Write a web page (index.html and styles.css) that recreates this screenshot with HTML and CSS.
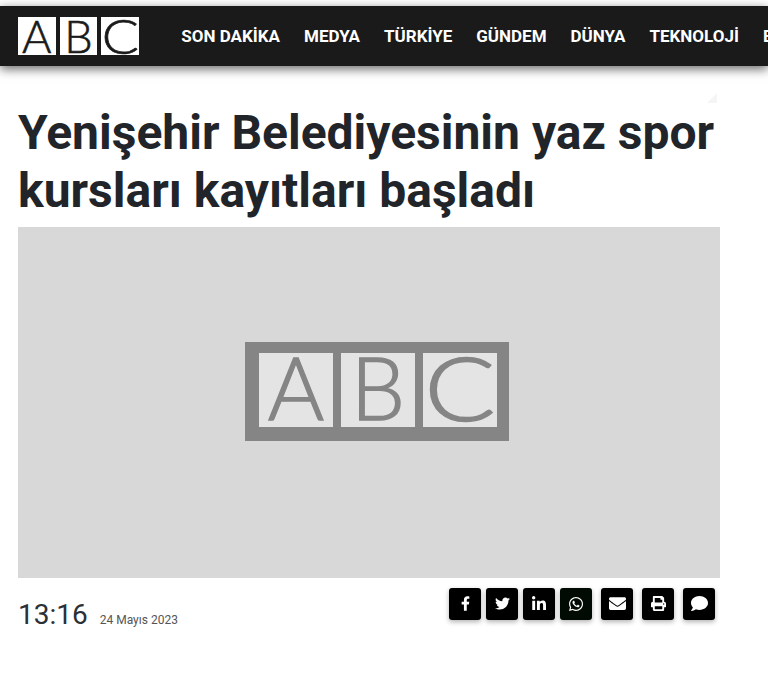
FILE: index.html
```html
<!DOCTYPE html>
<html lang="tr">
<head>
  <meta charset="UTF-8">
  <title>Yenişehir Belediyesinin yaz spor kursları kayıtları başladı</title>
  <link rel="stylesheet" href="styles.css">
</head>
<body>

  <header class="topbar">
    <a class="logo" href="#">
      <span class="logo-box">A</span>
      <span class="logo-box">B</span>
      <span class="logo-box"><span class="wide-c">C</span></span>
    </a>
    <nav class="nav">
      <a href="#">SON DAKİKA</a>
      <a href="#">MEDYA</a>
      <a href="#">TÜRKİYE</a>
      <a href="#">GÜNDEM</a>
      <a href="#">DÜNYA</a>
      <a href="#">TEKNOLOJİ</a>
      <a href="#">EKONOMİ</a>
    </nav>
  </header>

  <main class="article">
    <span class="corner"></span>
    <h1>Yenişehir Belediyesinin yaz spor kursları kayıtları başladı</h1>

    <div class="photo">
      <div class="photo-logo">
        <span class="photo-box">A</span>
        <span class="photo-box">B</span>
        <span class="photo-box"><span class="wide-c">C</span></span>
      </div>
    </div>

    <div class="meta">
      <div class="stamp">
        <span class="time">13:16</span>
        <span class="date">24 Mayıs 2023</span>
      </div>
      <div class="share">
        <a class="btn" href="#"><svg viewBox="0 0 320 512" width="9" height="15"><path d="M279.14 288l14.22-92.66h-88.91v-60.13c0-25.35 12.42-50.06 52.24-50.06h40.42V6.26S260.43 0 225.36 0c-73.22 0-121.08 44.38-121.08 124.72v70.62H22.89V288h81.39v224h100.17V288z"/></svg></a>
        <a class="btn" href="#"><svg viewBox="0 0 512 512" width="15" height="15"><path d="M459.37 151.716c.325 4.548.325 9.097.325 13.645 0 138.72-105.583 298.558-298.558 298.558-59.452 0-114.68-17.219-161.137-47.106 8.447.974 16.568 1.299 25.34 1.299 49.055 0 94.213-16.568 130.274-44.832-46.132-.975-84.792-31.188-98.112-72.772 6.498.974 12.995 1.624 19.818 1.624 9.421 0 18.843-1.3 27.614-3.573-48.081-9.747-84.143-51.98-84.143-102.985v-1.299c13.969 7.797 30.214 12.67 47.431 13.319-28.264-18.843-46.781-51.005-46.781-87.391 0-19.492 5.197-37.36 14.294-52.954 51.655 63.675 129.3 105.258 216.365 109.807-1.624-7.797-2.599-15.918-2.599-24.04 0-57.828 46.782-104.934 104.934-104.934 30.213 0 57.502 12.67 76.67 33.137 23.715-4.548 46.456-13.32 66.599-25.34-7.798 24.366-24.366 44.833-46.132 57.827 21.117-2.273 41.584-8.122 60.426-16.243-14.292 20.791-32.161 39.308-52.628 54.253z"/></svg></a>
        <a class="btn" href="#"><svg viewBox="0 0 448 512" width="14" height="16"><path d="M100.28 448H7.4V148.9h92.88zM53.79 108.1C24.09 108.1 0 83.5 0 53.8a53.79 53.79 0 0 1 107.58 0c0 29.7-24.1 54.3-53.79 54.3zM447.9 448h-92.68V302.4c0-34.7-.7-79.2-48.29-79.2-48.29 0-55.69 37.7-55.69 76.7V448h-92.78V148.9h89.08v40.8h1.3c12.4-23.5 42.69-48.3 87.88-48.3 94 0 111.28 61.9 111.28 142.3V448z"/></svg></a>
        <a class="btn btn-wa" href="#"><svg viewBox="0 0 448 512" width="14" height="16"><path d="M380.9 97.1C339 55.1 283.2 32 223.9 32c-122.4 0-222 99.6-222 222 0 39.1 10.2 77.3 29.6 111L0 480l117.7-30.9c32.4 17.7 68.9 27 106.1 27h.1c122.3 0 224.1-99.6 224.1-222 0-59.3-25.2-115-67.1-157zm-157 341.6c-33.2 0-65.7-8.9-94-25.7l-6.7-4-69.8 18.3L72 359.2l-4.4-7c-18.5-29.4-28.2-63.3-28.2-98.2 0-101.7 82.8-184.5 184.6-184.5 49.3 0 95.6 19.2 130.4 54.1 34.8 34.9 56.2 81.2 56.1 130.5 0 101.8-84.9 184.6-186.6 184.6zm101.2-138.2c-5.5-2.8-32.8-16.2-37.9-18-5.1-1.9-8.8-2.8-12.5 2.8-3.7 5.6-14.3 18-17.6 21.8-3.2 3.7-6.5 4.2-12 1.4-32.6-16.3-54-29.1-75.5-66-5.7-9.8 5.7-9.1 16.3-30.3 1.8-3.7.9-6.9-.5-9.7-1.4-2.8-12.5-30.1-17.1-41.2-4.5-10.8-9.1-9.3-12.5-9.5-3.2-.2-6.9-.2-10.6-.2-3.7 0-9.7 1.4-14.8 6.9-5.1 5.6-19.4 19-19.4 46.3 0 27.3 19.9 53.7 22.6 57.4 2.8 3.7 39.1 59.7 94.8 83.8 35.2 15.2 49 16.5 66.6 13.9 10.7-1.6 32.8-13.4 37.4-26.4 4.6-13 4.6-24.1 3.2-26.4-1.3-2.5-5-3.9-10.5-6.6z"/></svg></a>
        <a class="btn btn-gap" href="#"><svg viewBox="0 0 512 512" width="17" height="17"><path d="M502.3 190.8c3.9-3.1 9.7-.2 9.7 4.7V400c0 26.5-21.5 48-48 48H48c-26.5 0-48-21.5-48-48V195.6c0-5 5.7-7.8 9.7-4.7 22.4 17.4 52.1 39.5 154.1 113.6 21.1 15.4 56.7 47.8 92.2 47.6 35.7.3 72-32.8 92.3-47.6 102-74.1 131.6-96.3 154-113.7zM256 320c23.2.4 56.6-29.2 73.4-41.4 132.7-96.3 142.8-104.7 173.4-128.7 5.8-4.5 9.2-11.5 9.2-18.9v-19c0-26.5-21.5-48-48-48H48C21.5 64 0 85.5 0 112v19c0 7.4 3.4 14.3 9.2 18.9 30.6 23.9 40.7 32.4 173.4 128.7 16.8 12.2 50.2 41.8 73.4 41.4z"/></svg></a>
        <a class="btn btn-gap" href="#"><svg viewBox="0 0 512 512" width="15" height="15"><path d="M448 192V77.25c0-8.49-3.37-16.62-9.37-22.63L393.37 9.37c-6-6-14.14-9.37-22.63-9.37H96C78.33 0 64 14.33 64 32v160c-35.35 0-64 28.65-64 64v112c0 8.84 7.16 16 16 16h48v96c0 17.67 14.33 32 32 32h320c17.67 0 32-14.33 32-32v-96h48c8.84 0 16-7.16 16-16V256c0-35.35-28.65-64-64-64zm-64 256H128v-96h256v96zm0-224H128V64h192v48c0 8.84 7.16 16 16 16h48v96zm48 72c-13.25 0-24-10.75-24-24 0-13.26 10.75-24 24-24s24 10.74 24 24c0 13.25-10.75 24-24 24z"/></svg></a>
        <a class="btn btn-gap" href="#"><svg viewBox="0 0 512 512" width="17" height="17"><path d="M256 32C114.6 32 0 125.1 0 240c0 49.6 21.4 95 57 130.7C44.5 421.1 2.7 466 2.2 466.5c-2.2 2.3-2.8 5.7-1.5 8.7S4.8 480 8 480c66.3 0 116-31.8 140.6-51.4 32.7 12.3 69 19.4 107.4 19.4 141.4 0 256-93.1 256-208S397.4 32 256 32z"/></svg></a>
      </div>
    </div>
  </main>

</body>
</html>
```

FILE: styles.css
```css
* {
  box-sizing: border-box;
}

body {
  margin: 0;
  padding-top: 6px;
  font-family: Roboto, sans-serif;
  color: #212529;
  background: #fff;
  overflow: hidden;
}

a {
  text-decoration: none;
}

/* Top bar */
.topbar {
  height: 60px;
  padding-left: 18px;
  display: flex;
  align-items: center;
  background: #1a1a1a;
  box-shadow: 0 3px 10px rgba(0, 0, 0, 0.6);
  overflow: hidden;
}

.logo {
  display: flex;
  gap: 4px;
  flex: none;
  margin-top: -1px;
}

.logo-box {
  width: 37.6px;
  height: 38px;
  background: #fff;
  color: #1a1a1a;
  font-family: Lato, sans-serif;
  font-weight: 300;
  font-size: 45px;
  line-height: 38px;
  text-align: center;
  -webkit-text-stroke: 0.6px #1a1a1a;
}

/* the logo's C is rounder than any installed font's */
.wide-c {
  display: inline-block;
  transform: scale(1.22, 1.04);
}

.nav {
  display: flex;
  gap: 24px;
  margin-left: 42.5px;
  margin-top: -1px;
  flex: none;
}

.nav a {
  color: #fff;
  font-weight: 700;
  font-size: 17px;
  white-space: nowrap;
}

/* Article */
.article {
  position: relative;
  width: 702px;
  margin-left: 18px;
  padding-top: 38px;
}

.corner {
  position: absolute;
  top: 27px;
  right: 3px;
  border-style: solid;
  border-width: 0 0 10px 10px;
  border-color: transparent transparent #f5f5f5 transparent;
}

h1 {
  margin: 0 0 7.8px;
  font-size: 48px;
  font-weight: 700;
  line-height: 57.6px;
}

.photo {
  height: 351px;
  background: #d8d8d8;
  display: flex;
  align-items: center;
  justify-content: center;
}

.photo-logo {
  display: flex;
  gap: 8px;
  padding: 11px 12px 14px 14px;
  background: #858585;
  margin-left: 16px;
  margin-bottom: 22px;
}

.photo-box {
  width: 74px;
  height: 74px;
  background: #e4e4e4;
  color: #858585;
  font-family: Lato, sans-serif;
  font-weight: 300;
  font-size: 86px;
  line-height: 68px;
  text-align: center;
  -webkit-text-stroke: 1.4px #858585;
}

/* Time + share row */
.meta {
  display: flex;
  justify-content: space-between;
  align-items: flex-start;
  padding-top: 10px;
}

.stamp {
  display: flex;
  align-items: baseline;
  gap: 12px;
  padding-top: 10px;
}

.time {
  font-size: 28px;
  font-weight: 400;
  line-height: 34px;
  color: #2b3036;
}

.date {
  font-size: 12px;
  color: #555;
}

.share {
  display: flex;
  gap: 5px;
  margin-right: 5px;
}

.btn {
  width: 32px;
  height: 32px;
  display: flex;
  align-items: center;
  justify-content: center;
  background: #000;
  border-radius: 3px;
  box-shadow: 0 2px 5px rgba(0, 0, 0, 0.3);
}

.btn svg {
  fill: #fff;
}

.btn-wa {
  background: #010b03;
}

.btn-gap {
  margin-left: 4px;
}
```
